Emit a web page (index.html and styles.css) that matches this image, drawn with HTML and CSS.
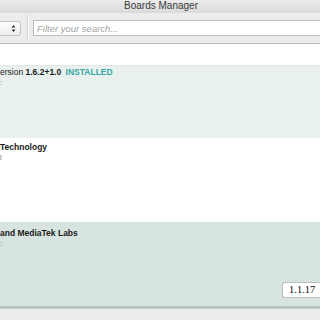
FILE: index.html
```html
<!DOCTYPE html>
<html lang="en">
<head>
    <meta charset="UTF-8">
    <title>Boards Manager</title>
    <link rel="stylesheet" href="styles.css">
</head>
<body>
    <div class="window">
        <div class="titlebar">Boards Manager</div>

        <div class="toolbar">
            <div class="select">
                <span class="arrows">
                    <svg width="5" height="9" viewBox="0 0 5 9"><path d="M0.5 3.5 L2.5 1 L4.5 3.5 Z M0.5 5.5 L2.5 8 L4.5 5.5 Z" fill="#333"/></svg>
                </span>
            </div>
            <div class="divider"></div>
            <input class="search" type="text" placeholder="Filter your search...">
        </div>

        <div class="list">
            <div class="spacer"></div>

            <div class="row row-installed">
                <p class="row-title">ersion <b>1.6.2+1.0</b> <b class="installed">INSTALLED</b></p>
                <p class="row-sub">:</p>
            </div>

            <div class="row">
                <p class="row-title"><b>Technology</b></p>
                <p class="row-sub">l</p>
            </div>

            <div class="row row-selected">
                <p class="row-title"><b>and MediaTek Labs</b></p>
                <p class="row-sub">:</p>
                <div class="row-actions">
                    <span class="version">1.1.17</span>
                </div>
            </div>
        </div>

        <div class="footer"></div>
    </div>
</body>
</html>
```

FILE: styles.css
```css
body {
    margin: 0;
    font-family: "Liberation Sans", Arial, sans-serif;
    color: #222;
    background: #ececec;
}
.window {
    width: 320px;
    height: 320px;
    overflow: hidden;
    display: flex;
    flex-direction: column;
}
.titlebar {
    height: 13px;
    line-height: 12px;
    font-size: 10px;
    text-align: center;
    color: #3a3a3a;
    background: linear-gradient(#ececec, #dadada);
    padding-left: 2px;
}
.toolbar {
    height: 30px;
    display: flex;
    align-items: center;
    background: #ececec;
    border-bottom: 1px solid #b9b9b9;
}
.select {
    width: 21px;
    height: 15px;
    box-sizing: border-box;
    background: linear-gradient(#fdfdfd, #eeeeee);
    border: 1px solid #c4c4c4;
    border-left: none;
    border-radius: 0 3px 3px 0;
    display: flex;
    align-items: center;
    justify-content: flex-end;
    padding-right: 4px;
}
.arrows {
    display: flex;
}
.divider {
    width: 1px;
    height: 28px;
    margin: 0 4px 0 6px;
    background: #d6d6d6;
    border-right: 1px solid #f8f8f8;
}
.search {
    flex: 1;
    height: 16px;
    box-sizing: border-box;
    margin: 0 -4px 0 0;
    border: 1px solid #bdbdbd;
    background: #fff;
    padding: 0 3px;
    font-family: "Liberation Sans", Arial, sans-serif;
    font-style: italic;
    font-size: 9.5px;
    outline: none;
}
.search::placeholder {
    color: #a3a3a3;
}
.list {
    flex: 1;
    display: flex;
    flex-direction: column;
    background: #fff;
}
.spacer {
    height: 21px;
}
.row {
    position: relative;
    height: 84px;
    padding-top: 4px;
    box-sizing: border-box;
    background: #fff;
}
.row-installed {
    height: 73px;
    padding-top: 1px;
    background: #e8f1ee;
    border-top: 1px solid #e2e7e5;
}
.row-selected {
    height: 86px;
    padding-top: 6px;
    background: #d8e4df;
    border-bottom: 2px solid #b3c4bd;
}
.row-title {
    margin: 0;
    font-size: 8.5px;
    line-height: 11px;
    color: #1a1a1a;
}
.row-title b {
    font-weight: bold;
}
.installed {
    color: #3aa5a6;
    margin-left: 2px;
}
.row-sub {
    margin: 0;
    font-size: 7px;
    line-height: 9px;
    color: #666;
}
.row-actions {
    position: absolute;
    right: 0;
    bottom: 8px;
}
.version {
    display: inline-block;
    width: 38px;
    height: 16px;
    box-sizing: border-box;
    border: 1px solid #bdbdbd;
    border-right: none;
    border-radius: 3px 0 0 3px;
    background: #fff;
    padding: 1px 0 0 6px;
    font-family: "Liberation Serif", "Times New Roman", serif;
    font-size: 10.5px;
    line-height: 12px;
    color: #111;
}
.footer {
    height: 11px;
    background: #ececec;
    border-top: 1px solid #c9cfcc;
}
```
